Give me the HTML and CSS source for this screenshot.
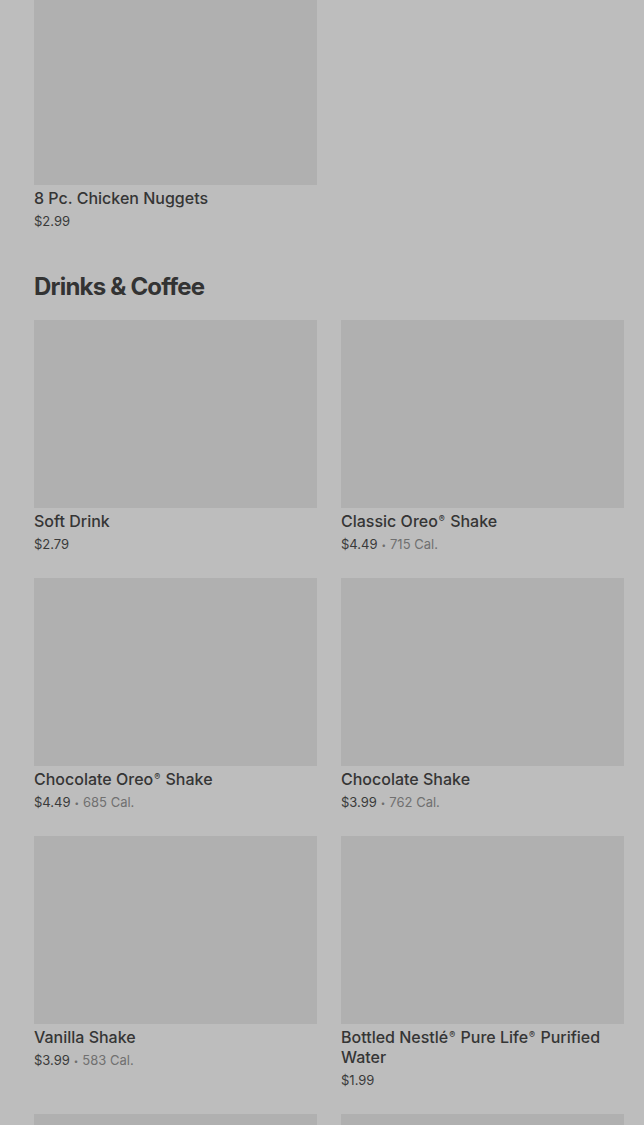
FILE: index.html
```html
<!DOCTYPE html>
<html lang="en">
<head>
  <meta charset="UTF-8" />
  <meta name="viewport" content="width=device-width, initial-scale=1.0" />
  <title>Menu</title>
  <link rel="stylesheet" href="styles.css">
</head>
<body>

<div class="menu">
  <section class="menu-section">
    <div class="item-grid">
      <div class="item">
        <div class="item-photo"></div>
        <div class="item-name">8 Pc. Chicken Nuggets</div>
        <div class="item-meta">$2.99</div>
      </div>
    </div>
  </section>

  <section class="menu-section">
    <h2 class="section-title">Drinks &amp; Coffee</h2>
    <div class="item-grid">
      <div class="item">
        <div class="item-photo"></div>
        <div class="item-name">Soft Drink</div>
        <div class="item-meta">$2.79</div>
      </div>
      <div class="item">
        <div class="item-photo"></div>
        <div class="item-name">Classic Oreo<sup>®</sup> Shake</div>
        <div class="item-meta">$4.49<span class="dot">•</span><span class="cal">715 Cal.</span></div>
      </div>
      <div class="item">
        <div class="item-photo"></div>
        <div class="item-name">Chocolate Oreo<sup>®</sup> Shake</div>
        <div class="item-meta">$4.49<span class="dot">•</span><span class="cal">685 Cal.</span></div>
      </div>
      <div class="item">
        <div class="item-photo"></div>
        <div class="item-name">Chocolate Shake</div>
        <div class="item-meta">$3.99<span class="dot">•</span><span class="cal">762 Cal.</span></div>
      </div>
      <div class="item">
        <div class="item-photo"></div>
        <div class="item-name">Vanilla Shake</div>
        <div class="item-meta">$3.99<span class="dot">•</span><span class="cal">583 Cal.</span></div>
      </div>
      <div class="item">
        <div class="item-photo"></div>
        <div class="item-name">Bottled Nestlé<sup>®</sup> Pure Life<sup>®</sup> Purified Water</div>
        <div class="item-meta">$1.99</div>
      </div>
      <div class="item">
        <div class="item-photo"></div>
      </div>
      <div class="item">
        <div class="item-photo"></div>
      </div>
    </div>
  </section>
</div>

</body>
</html>
```

FILE: styles.css
```css
body {
  font-family: Inter, Roboto, "Liberation Sans", sans-serif;
  background: #bdbdbd;
  color: #333;
  margin: 0;
  overflow: hidden;
}

.menu {
  margin-top: -3px;
  padding: 0 20px 0 34px;
}

.menu-section {
  margin-bottom: 40px;
}

.section-title {
  font-size: 24px;
  line-height: 32px;
  font-weight: 700;
  letter-spacing: -0.8px;
  color: #333;
  margin: 0 0 17px;
}

.item-grid {
  display: grid;
  grid-template-columns: 1fr 1fr;
  column-gap: 24px;
  row-gap: 24px;
}

.item-photo {
  height: 188px;
  background: #b0b0b0;
}

.item-name {
  margin-top: 3px;
  font-size: 16px;
  line-height: 20px;
  font-weight: 500;
  color: #353535;
}

.item-name sup {
  font-size: 9px;
  line-height: 1;
  vertical-align: baseline;
  position: relative;
  top: -5px;
  margin: 0 1px;
}

.item-meta {
  margin-top: 3px;
  height: 20px;
  font-size: 13px;
  line-height: 20px;
  color: #3a3a3a;
}

.dot {
  font-size: 8px;
  line-height: 1;
  margin: 0 4px;
  color: #6e6e6e;
  position: relative;
  top: -1px;
}

.cal {
  color: #707070;
}
```
